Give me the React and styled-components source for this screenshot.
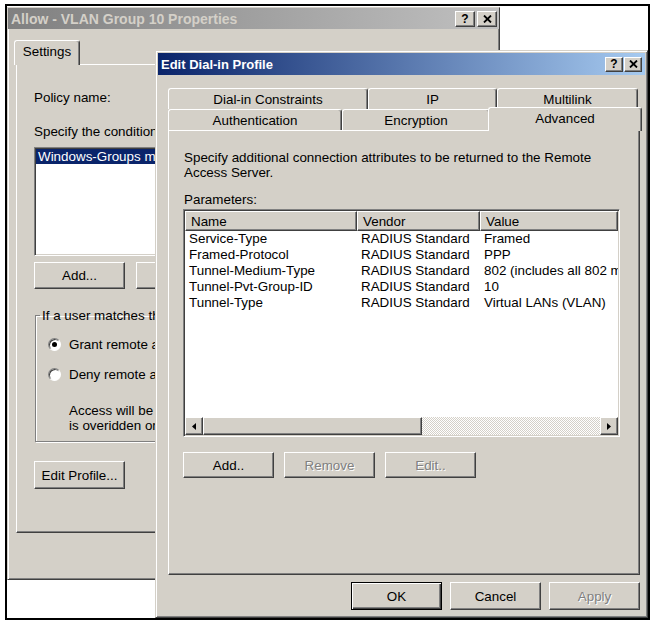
import React from 'react';
import styled, { createGlobalStyle, css } from 'styled-components';

const GlobalStyle = createGlobalStyle`
  html, body { margin: 0; padding: 0; background: #fff; }
  body { font-family: "Liberation Sans", Arial, sans-serif; font-size: 13.4px; color: #000; }
  * { box-sizing: border-box; }
`;

const raised = css`
  border: 1px solid;
  border-color: #fff #404040 #404040 #fff;
  box-shadow: inset -1px -1px 0 #808080;
`;

const sunken = css`
  border: 1px solid;
  border-color: #808080 #fff #fff #808080;
  box-shadow: inset 1px 1px 0 #404040, inset -1px -1px 0 #d4d0c8;
  padding: 1px;
`;

const Desktop = styled.div`
  position: relative;
  width: 656px;
  height: 623px;
  background: #fff;
  overflow: hidden;
`;

const Frame = styled.div`
  position: absolute;
  left: 5px;
  top: 4px;
  width: 645px;
  height: 616px;
  border: 2px solid #000;
`;

const Window = styled.div`
  position: absolute;
  left: ${p => p.$x}px;
  top: ${p => p.$y}px;
  width: ${p => p.$w}px;
  height: ${p => p.$h}px;
  z-index: ${p => p.$z};
  background: #d4d0c8;
  border: 1px solid;
  border-color: #d4d0c8 #404040 #404040 #d4d0c8;
  box-shadow: inset 1px 1px 0 #fff, inset -1px -1px 0 #808080;
  padding: ${p => p.$pad}px;
  display: flex;
  flex-direction: column;
  overflow: hidden;
`;

const TitleBar = styled.div`
  flex: none;
  height: ${p => p.$h}px;
  display: flex;
  align-items: center;
  padding: 0 ${p => p.$pr}px 0 3px;
  background: ${p => (p.$active
    ? 'linear-gradient(to right, #0a246a, #a6caf0)'
    : 'linear-gradient(to right, #808080, #c0c0c0)')};
  color: ${p => (p.$active ? '#fff' : '#d4d0c8')};
  font-weight: bold;
  font-size: ${p => p.$fs}px;
`;

const TitleText = styled.span`
  flex: 1;
  white-space: nowrap;
  overflow: hidden;
`;

const CaptionButtons = styled.div`
  display: flex;
  gap: ${p => p.$gap}px;
`;

const CaptionButton = styled.div`
  width: ${p => p.$w}px;
  height: ${p => p.$h}px;
  background: #d4d0c8;
  ${raised};
  display: flex;
  align-items: center;
  justify-content: center;
  color: #000;
  font-family: "Liberation Sans", Arial, sans-serif;
  font-weight: bold;
  font-size: 12px;
  line-height: 1;
`;

const CloseGlyph = () => (
  <svg width="9" height="8" viewBox="0 0 9 8">
    <path d="M1 0.5 L8 7.5 M8 0.5 L1 7.5" stroke="#000" strokeWidth="1.8" fill="none" />
  </svg>
);

const BackBody = styled.div`
  flex: 1;
  display: flex;
  flex-direction: column;
  padding: 11px 0 0 8px;
`;

const FrontBody = styled.div`
  flex: 1;
  display: flex;
  flex-direction: column;
  padding: 13px 0 0 10px;
`;

const TabStrip = styled.div`
  display: flex;
  align-items: flex-end;
  height: ${p => (p.$h ? `${p.$h}px` : 'auto')};
  position: relative;
`;

const Tab = styled.div`
  flex: none;
  width: ${p => p.$w}px;
  height: ${p => p.$h}px;
  display: flex;
  align-items: center;
  justify-content: center;
  background: #d4d0c8;
  border-top: 1px solid #fff;
  border-left: 1px solid #fff;
  border-right: 1px solid #404040;
  box-shadow: inset -1px 0 0 #808080;
  border-radius: 3px 3px 0 0;
  white-space: nowrap;
  position: relative;
  ${p => p.$selected && css`
    z-index: 2;
    margin: 0 ${p.$spread ? -2 : 0}px -1px -2px;
    padding-bottom: 3px;
  `}
`;

const Panel = styled.div`
  flex: none;
  width: ${p => p.$w}px;
  height: ${p => p.$h}px;
  background: #d4d0c8;
  ${raised};
  padding: ${p => p.$pad};
  display: flex;
  flex-direction: column;
  align-items: flex-start;
  overflow: hidden;
`;

const Label = styled.div`
  line-height: 15px;
  white-space: nowrap;
  margin-top: ${p => p.$mt || 0}px;
`;

const Description = styled.div`
  line-height: 15px;
  max-width: 424px;
`;

const ListBox = styled.div`
  flex: none;
  margin-top: ${p => p.$mt}px;
  width: ${p => p.$w}px;
  height: ${p => p.$h}px;
  ${sunken};
  background: #fff;
  display: flex;
  flex-direction: column;
  overflow: hidden;
`;

const ListBoxItem = styled.div`
  line-height: 15px;
  padding-left: 2px;
  white-space: nowrap;
  overflow: hidden;
  background: ${p => (p.$selected ? '#0a246a' : 'transparent')};
  color: ${p => (p.$selected ? '#fff' : '#000')};
`;

const ButtonRow = styled.div`
  flex: none;
  display: flex;
  gap: ${p => p.$gap}px;
  margin-top: ${p => p.$mt}px;
  margin-left: ${p => p.$ml || 0}px;
  width: ${p => (p.$w ? `${p.$w}px` : 'auto')};
  justify-content: ${p => (p.$end ? 'flex-end' : 'flex-start')};
`;

const Button = styled.button`
  flex: none;
  width: ${p => p.$w || 91}px;
  height: ${p => p.$h || 27}px;
  font: inherit;
  padding: 0;
  background: #d4d0c8;
  ${raised};
  color: ${p => (p.disabled ? '#808080' : '#000')};
  text-shadow: ${p => (p.disabled ? '1px 1px 0 #fff' : 'none')};
  white-space: nowrap;
  overflow: hidden;
  ${p => p.$default && css`
    border: 1px solid #000;
    box-shadow: inset 1px 1px 0 #fff, inset -1px -1px 0 #404040, inset -2px -2px 0 #808080;
  `}
`;

const GroupBox = styled.fieldset`
  flex: none;
  margin: ${p => p.$mt}px 0 0 1px;
  width: 200px;
  border: 1px solid #808080;
  box-shadow: inset 1px 1px 0 #fff, 1px 1px 0 #fff;
  padding: 14px 0 8px 12px;
  display: flex;
  flex-direction: column;
  overflow: hidden;
`;

const Legend = styled.legend`
  padding: 0 2px;
  margin-left: -8px;
  line-height: 15px;
  white-space: nowrap;
`;

const RadioRow = styled.label`
  display: flex;
  align-items: center;
  gap: 8px;
  line-height: 15px;
  white-space: nowrap;
  margin-top: ${p => p.$mt || 0}px;
`;

const Radio = styled.span`
  flex: none;
  width: 13px;
  height: 13px;
  border-radius: 50%;
  background: #fff;
  border: 1px solid;
  border-color: #808080 #fff #fff #808080;
  box-shadow: inset 1px 1px 0 #404040;
  position: relative;
  ${p => p.$checked && css`
    &::after {
      content: '';
      position: absolute;
      left: 3px;
      top: 3px;
      width: 5px;
      height: 5px;
      border-radius: 50%;
      background: #000;
    }
  `}
`;

const Note = styled.div`
  line-height: 15px;
  padding-left: 21px;
  white-space: nowrap;
  margin-top: ${p => p.$mt || 0}px;
`;

const COLS = '172px 123px 1fr';

const ListView = styled.div`
  flex: none;
  margin: 2px 0 0 -1px;
  width: 437px;
  height: 228px;
  ${sunken};
  background: #fff;
  display: flex;
  flex-direction: column;
  overflow: hidden;
`;

const HeaderRow = styled.div`
  display: grid;
  grid-template-columns: ${COLS};
  flex: none;
`;

const HeaderCell = styled.div`
  height: 20px;
  display: flex;
  align-items: center;
  padding-left: 5px;
  background: #d4d0c8;
  ${raised};
  white-space: nowrap;
  overflow: hidden;
`;

const Rows = styled.div`
  flex: 1;
  overflow: hidden;
`;

const Row = styled.div`
  display: grid;
  grid-template-columns: ${COLS};
  height: 16px;
  line-height: 16px;
`;

const Cell = styled.div`
  padding-left: 4px;
  white-space: nowrap;
  overflow: hidden;
`;

const ScrollBar = styled.div`
  flex: none;
  display: flex;
  height: 18px;
`;

const ScrollButton = styled.div`
  flex: none;
  width: ${p => p.$w}px;
  height: 18px;
  background: #d4d0c8;
  ${raised};
  display: flex;
  align-items: center;
  justify-content: center;
`;

const Track = styled.div`
  flex: 1;
  background-color: #fff;
  background-image: conic-gradient(#d4d0c8 25%, #fff 0 50%, #d4d0c8 0 75%, #fff 0);
  background-size: 2px 2px;
`;

const Arrow = ({ dir }) => (
  <svg width="4" height="7" viewBox="0 0 4 7">
    <path d={dir === 'left' ? 'M4 0 L0 3.5 L4 7 Z' : 'M0 0 L4 3.5 L0 7 Z'} fill="#000" />
  </svg>
);

const params = [
  ['Service-Type', 'RADIUS Standard', 'Framed'],
  ['Framed-Protocol', 'RADIUS Standard', 'PPP'],
  ['Tunnel-Medium-Type', 'RADIUS Standard', '802 (includes all 802 media plus Ethernet canonical format)'],
  ['Tunnel-Pvt-Group-ID', 'RADIUS Standard', '10'],
  ['Tunnel-Type', 'RADIUS Standard', 'Virtual LANs (VLAN)'],
];

export default function App() {
  return (
    <>
      <GlobalStyle />
      <Desktop>
        <Frame>
          <Window $x={0} $y={1} $w={493} $h={573} $pad={0} $z={1}>
            <TitleBar $h={21} $fs={14} $pr={2}>
              <TitleText>Allow - VLAN Group 10 Properties</TitleText>
              <CaptionButtons $gap={2}>
                <CaptionButton $w={20} $h={16}>?</CaptionButton>
                <CaptionButton $w={20} $h={16}><CloseGlyph /></CaptionButton>
              </CaptionButtons>
            </TitleBar>
            <BackBody>
              <TabStrip>
                <Tab $w={66} $h={25} $selected>Settings</Tab>
              </TabStrip>
              <Panel $w={142} $h={469} $pad="25px 0 0 17px">
                <Label>Policy name:</Label>
                <Label $mt={19}>Specify the conditions to match:</Label>
                <ListBox $mt={8} $w={160} $h={109}>
                  <ListBoxItem $selected>Windows-Groups matches "VLAN Group 10"</ListBoxItem>
                </ListBox>
                <ButtonRow $gap={11} $mt={6}>
                  <Button>Add...</Button>
                  <Button>Remove</Button>
                </ButtonRow>
                <GroupBox $mt={19}>
                  <Legend>If a user matches the conditions:</Legend>
                  <RadioRow><Radio $checked />Grant remote access permission</RadioRow>
                  <RadioRow $mt={15}><Radio />Deny remote access permission</RadioRow>
                  <Note $mt={21}>Access will be granted with the profile you specify, unless access</Note>
                  <Note>is overidden on a per-user basis.</Note>
                </GroupBox>
                <ButtonRow $gap={11} $mt={19}>
                  <Button $h={28}>Edit Profile...</Button>
                </ButtonRow>
              </Panel>
            </BackBody>
          </Window>

          <Window $x={148} $y={44} $w={493} $h={568} $pad={2} $z={2}>
            <TitleBar $active $h={22} $fs={13} $pr={3}>
              <TitleText>Edit Dial-in Profile</TitleText>
              <CaptionButtons $gap={1}>
                <CaptionButton $w={18} $h={15}>?</CaptionButton>
                <CaptionButton $w={18} $h={15}><CloseGlyph /></CaptionButton>
              </CaptionButtons>
            </TitleBar>
            <FrontBody>
              <TabStrip $h={21}>
                <Tab $w={200} $h={21}>Dial-in Constraints</Tab>
                <Tab $w={129} $h={21}>IP</Tab>
                <Tab $w={141} $h={21}>Multilink</Tab>
              </TabStrip>
              <TabStrip $h={21}>
                <Tab $w={174} $h={21}>Authentication</Tab>
                <Tab $w={148} $h={21}>Encryption</Tab>
                <Tab $w={154} $h={24} $selected $spread>Advanced</Tab>
              </TabStrip>
              <Panel $w={472} $h={445} $pad="19px 0 0 15px">
                <Description>
                  Specify additional connection attributes to be returned to the Remote Access Server.
                </Description>
                <Label $mt={12}>Parameters:</Label>
                <ListView>
                  <HeaderRow>
                    <HeaderCell>Name</HeaderCell>
                    <HeaderCell>Vendor</HeaderCell>
                    <HeaderCell>Value</HeaderCell>
                  </HeaderRow>
                  <Rows>
                    {params.map(r => (
                      <Row key={r[0]}>
                        <Cell>{r[0]}</Cell>
                        <Cell>{r[1]}</Cell>
                        <Cell>{r[2]}</Cell>
                      </Row>
                    ))}
                  </Rows>
                  <ScrollBar>
                    <ScrollButton $w={18}><Arrow dir="left" /></ScrollButton>
                    <ScrollButton $w={219} />
                    <Track />
                    <ScrollButton $w={18}><Arrow dir="right" /></ScrollButton>
                  </ScrollBar>
                </ListView>
                <ButtonRow $gap={10} $mt={15} $ml={-1}>
                  <Button $h={26}>Add..</Button>
                  <Button $h={26} disabled>Remove</Button>
                  <Button $h={26} disabled>Edit..</Button>
                </ButtonRow>
              </Panel>
              <ButtonRow $gap={8} $mt={7} $w={472} $end>
                <Button $h={28} $default>OK</Button>
                <Button $h={28}>Cancel</Button>
                <Button $h={28} disabled>Apply</Button>
              </ButtonRow>
            </FrontBody>
          </Window>
        </Frame>
      </Desktop>
    </>
  );
}
